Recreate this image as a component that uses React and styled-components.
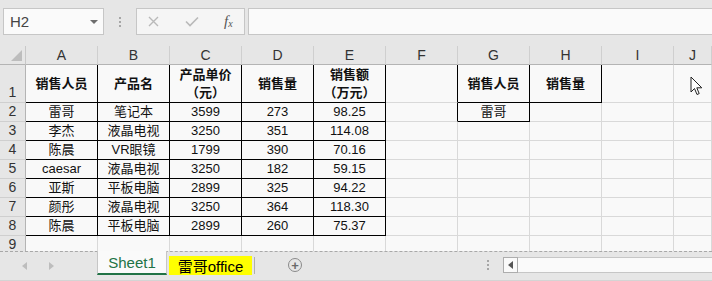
import React from 'react'
import styled, { createGlobalStyle } from 'styled-components'

const GlobalStyle = createGlobalStyle`
  html, body { margin: 0; padding: 0; background: #e6e6e6; }
  body { font-family: "Liberation Sans", "Noto Sans CJK SC", sans-serif; }
`

const COLS = ['A', 'B', 'C', 'D', 'E', 'F', 'G', 'H', 'I', 'J']
const ROW_H = [38, 19, 19, 19, 19, 19, 19, 19, 19]

const HEAD = [
  '销售人员', '产品名', ['产品单价', '（元）'], '销售量', ['销售额', '（万元）'],
  '', '销售人员', '销售量', '', ''
]

const DATA = [
  ['雷哥', '笔记本', '3599', '273', '98.25', '', '雷哥'],
  ['李杰', '液晶电视', '3250', '351', '114.08'],
  ['陈晨', 'VR眼镜', '1799', '390', '70.16'],
  ['caesar', '液晶电视', '3250', '182', '59.15'],
  ['亚斯', '平板电脑', '2899', '325', '94.22'],
  ['颜彤', '液晶电视', '3250', '364', '118.30'],
  ['陈晨', '平板电脑', '2899', '260', '75.37'],
  [],
]

// c: 1..10 (A..J), r: 1..9
const inBox = (c, r) =>
  (c >= 1 && c <= 5 && r >= 1 && r <= 8) ||
  ((c === 7 || c === 8) && r === 1) ||
  (c === 7 && r === 2)

const Page = styled.div`
  position: relative;
  width: 712px;
  height: 281px;
  overflow: hidden;
  display: flex;
  flex-direction: column;
  background: #e6e6e6;
`

const TopBar = styled.div`
  height: 46px;
  box-sizing: border-box;
  padding: 8px 0 11px 3px;
  display: flex;
  align-items: stretch;
`

const NameBox = styled.div`
  width: 101px;
  box-sizing: border-box;
  border: 1px solid #c6c6c6;
  background: #fafafa;
  display: flex;
  align-items: center;
  justify-content: space-between;
  padding: 0 5px 0 6px;
  font-size: 15px;
  color: #444;
`

const DropArrow = styled.span`
  width: 0;
  height: 0;
  border-left: 4px solid transparent;
  border-right: 4px solid transparent;
  border-top: 4px solid #6d6d6d;
`

const Grip = styled.div`
  width: 32px;
  display: flex;
  flex-direction: column;
  align-items: center;
  justify-content: center;
  gap: 2px;
  span {
    width: 2px;
    height: 2px;
    background: #a6a6a6;
  }
`

const FxButtons = styled.div`
  width: 109px;
  box-sizing: border-box;
  border: 1px solid #c6c6c6;
  background: #f5f5f5;
  display: flex;
  align-items: center;
  padding-left: 11px;
  gap: 19px;
`

const FxLabel = styled.span`
  font-family: "Liberation Serif", serif;
  font-style: italic;
  font-size: 15px;
  color: #555;
  margin-left: 6px;
  sub {
    font-size: 10px;
    vertical-align: -1px;
  }
`

const FormulaInput = styled.div`
  flex: 1;
  margin-left: 3px;
  border: 1px solid #c6c6c6;
  border-right: none;
  background: #fafafa;
`

const Sheet = styled.div`
  height: 205px;
  overflow: hidden;
  display: flex;
  flex-direction: column;
`

const Row = styled.div`
  display: flex;
  flex: none;
  height: ${p => p.$h}px;
`

const Corner = styled.div`
  position: relative;
  width: 26px;
  flex: none;
  box-sizing: border-box;
  border-right: 1px solid #c8c8c8;
  border-bottom: 1px solid #b4b4b4;
  background: #e6e6e6;
  &::after {
    content: '';
    position: absolute;
    right: 3px;
    bottom: 3px;
    width: 0;
    height: 0;
    border-left: 11px solid transparent;
    border-bottom: 11px solid #bdbdbd;
  }
`

const ColHead = styled.div`
  width: ${p => p.$w}px;
  flex: none;
  box-sizing: border-box;
  border-right: 1px solid #cfcfcf;
  border-bottom: 1px solid #b4b4b4;
  background: #e6e6e6;
  display: flex;
  align-items: center;
  justify-content: center;
  font-size: 14px;
  color: #333;
`

const RowHead = styled.div`
  width: 26px;
  flex: none;
  box-sizing: border-box;
  border-right: 1px solid #b4b4b4;
  border-bottom: 1px solid #cfcfcf;
  background: #e6e6e6;
  display: flex;
  align-items: flex-end;
  justify-content: center;
  padding-bottom: 1px;
  font-size: 14px;
  line-height: 17px;
  color: #333;
`

const Cell = styled.div`
  width: ${p => p.$w}px;
  flex: none;
  box-sizing: border-box;
  border-right: 1px solid ${p => (p.$br ? '#000' : '#d9d9d9')};
  border-bottom: 1px solid ${p => (p.$bb ? '#000' : '#d9d9d9')};
  background: #f9f9f9;
  display: flex;
  flex-direction: column;
  align-items: center;
  justify-content: center;
  font-size: 13px;
  line-height: 18px;
  font-weight: ${p => (p.$bold ? 700 : 400)};
  color: #111;
  white-space: nowrap;
  overflow: hidden;
`

const TabBar = styled.div`
  position: relative;
  height: 30px;
  box-sizing: border-box;
  border-top: 1px dashed #a8a8a8;
  border-bottom: 1px solid #d4d4d4;
  display: flex;
  align-items: center;
`

const NavArrows = styled.div`
  width: 97px;
  display: flex;
  align-items: center;
  gap: 22px;
  padding-left: 22px;
  box-sizing: border-box;
`

const Tri = styled.span`
  width: 0;
  height: 0;
  border-top: 4px solid transparent;
  border-bottom: 4px solid transparent;
  ${p => (p.$left ? 'border-right: 5px solid #bdbdbd;' : 'border-left: 5px solid #bdbdbd;')}
`

const ActiveTab = styled.div`
  align-self: stretch;
  margin-top: -1px;
  width: 70px;
  box-sizing: border-box;
  background: #fafafa;
  border-left: 1px solid #c6c6c6;
  border-right: 1px solid #c6c6c6;
  border-bottom: 2px solid #217346;
  margin-bottom: 5px;
  display: flex;
  align-items: center;
  justify-content: center;
  font-size: 15px;
  color: #217346;
`

const Highlight = styled.div`
  margin: 0 0 2px 2px;
  width: 83px;
  height: 19px;
  background: #ffff00;
  display: flex;
  align-items: center;
  justify-content: center;
  font-size: 15px;
  color: #000;
`

const Divider = styled.span`
  width: 1px;
  height: 17px;
  margin: 0 0 2px 2px;
  background: #b0b0b0;
`

const AddSheet = styled.div`
  width: 14px;
  height: 14px;
  margin: 0 0 2px 33px;
  box-sizing: border-box;
  border: 1.5px solid #8a8a8a;
  border-radius: 50%;
  display: flex;
  align-items: center;
  justify-content: center;
  color: #6a6a6a;
  font-size: 13px;
  font-weight: 700;
  line-height: 1;
`

const ScrollDots = styled.div`
  margin: 0 0 2px 185px;
  display: flex;
  flex-direction: column;
  gap: 2px;
  span {
    width: 2px;
    height: 2px;
    background: #a6a6a6;
  }
`

const ScrollLeft = styled.div`
  margin: 0 0 2px 14px;
  width: 15px;
  height: 16px;
  box-sizing: border-box;
  border: 1px solid #adadad;
  background: #fafafa;
  display: flex;
  align-items: center;
  justify-content: center;
`

const ScrollTrack = styled.div`
  flex: 1;
  height: 16px;
  margin-bottom: 2px;
  box-sizing: border-box;
  border: 1px solid #c6c6c6;
  border-left: none;
  border-right: none;
  background: #fafafa;
`

const Pointer = styled.svg`
  position: absolute;
  left: 690px;
  top: 76px;
`

function HeaderText({ value }) {
  if (Array.isArray(value)) {
    return value.map(line => <span key={line}>{line}</span>)
  }
  return value
}

export default function App() {
  const colW = c => (c === 10 ? 38 : 72)
  return (
    <Page>
      <GlobalStyle />
      <TopBar>
        <NameBox>
          H2
          <DropArrow />
        </NameBox>
        <Grip><span /><span /><span /></Grip>
        <FxButtons>
          <svg width="11" height="11" viewBox="0 0 11 11">
            <path d="M1 1L10 10M10 1L1 10" stroke="#b9b9b9" strokeWidth="1.4" />
          </svg>
          <svg width="14" height="11" viewBox="0 0 14 11" style={{ marginLeft: 7 }}>
            <path d="M1 5.5L5 9.5L13 1.5" stroke="#b9b9b9" strokeWidth="1.6" fill="none" />
          </svg>
          <FxLabel>f<sub>x</sub></FxLabel>
        </FxButtons>
        <FormulaInput />
      </TopBar>

      <Sheet>
        <Row $h={19}>
          <Corner />
          {COLS.map((l, i) => (
            <ColHead key={l} $w={colW(i + 1)}>{l}</ColHead>
          ))}
        </Row>
        {ROW_H.map((h, ri) => {
          const r = ri + 1
          return (
            <Row key={r} $h={h}>
              <RowHead>{r}</RowHead>
              {COLS.map((l, ci) => {
                const c = ci + 1
                const value = r === 1 ? HEAD[ci] : (DATA[r - 2] || [])[ci] || ''
                return (
                  <Cell
                    key={l}
                    $w={colW(c)}
                    $br={inBox(c, r) || inBox(c + 1, r)}
                    $bb={inBox(c, r) || inBox(c, r + 1)}
                    $bold={r === 1}
                  >
                    <HeaderText value={value} />
                  </Cell>
                )
              })}
            </Row>
          )
        })}
      </Sheet>

      <TabBar>
        <NavArrows>
          <Tri $left />
          <Tri />
        </NavArrows>
        <ActiveTab>Sheet1</ActiveTab>
        <Highlight>雷哥office</Highlight>
        <Divider />
        <AddSheet>+</AddSheet>
        <ScrollDots><span /><span /><span /></ScrollDots>
        <ScrollLeft>
          <svg width="5" height="8" viewBox="0 0 5 8">
            <path d="M5 0L0 4L5 8Z" fill="#555" />
          </svg>
        </ScrollLeft>
        <ScrollTrack />
      </TabBar>

      <Pointer width="13" height="20" viewBox="0 0 13 20">
        <path d="M1 1L1 16L4.5 12.5L7 18.5L9.2 17.6L6.8 11.8L11.8 11.8Z" fill="#fff" stroke="#222" strokeWidth="1" strokeLinejoin="round" />
      </Pointer>
    </Page>
  )
}
